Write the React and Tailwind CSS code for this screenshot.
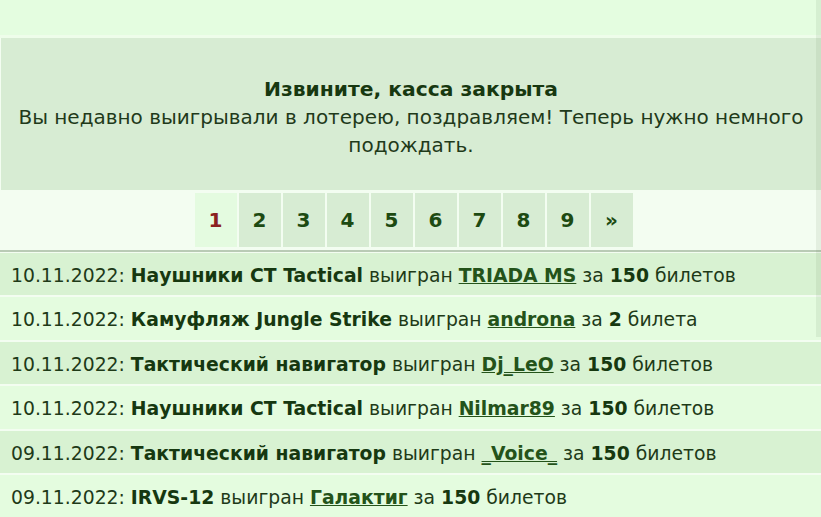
import React from "react";

const rows = [
  { date: "10.11.2022", item: "Наушники CT Tactical", user: "TRIADA MS", n: "150", word: "билетов" },
  { date: "10.11.2022", item: "Камуфляж Jungle Strike", user: "androna", n: "2", word: "билета" },
  { date: "10.11.2022", item: "Тактический навигатор", user: "Dj_LeO", n: "150", word: "билетов" },
  { date: "10.11.2022", item: "Наушники CT Tactical", user: "Nilmar89", n: "150", word: "билетов" },
  { date: "09.11.2022", item: "Тактический навигатор", user: "_Voice_", n: "150", word: "билетов" },
  { date: "09.11.2022", item: "IRVS-12", user: "Галактиг", n: "150", word: "билетов" },
];

const pages = ["1", "2", "3", "4", "5", "6", "7", "8", "9", "»"];

export default function App() {
  return (
    <div
      className="relative w-[821px] h-[517px] overflow-hidden bg-[#f3fdf1] text-[#1e3a18]"
      style={{ fontFamily: '"DejaVu Sans", Verdana, sans-serif' }}
    >
      <div className="h-[35px] bg-[#e4fde0]" />
      <div className="h-[3px] bg-[#eefdea]" />
      <div className="ml-[1px] h-[152px] bg-[#d7ecd3] flex flex-col items-center justify-center text-center pt-[5px] px-[10px] text-[20px] leading-[28px] text-[#1f3a1a]">
        <div className="font-bold text-[20.3px] text-[#173810]">Извините, касса закрыта</div>
        <div>Вы недавно выигрывали в лотерею, поздравляем! Теперь нужно немного подождать.</div>
      </div>
      <div className="h-[60px] flex justify-center items-center">
        <div className="flex gap-[2px] ml-[6px]">
          {pages.map((p, i) => (
            <div
              key={p}
              className={
                "w-[42px] h-[54px] flex items-center justify-center font-bold text-[20px] " +
                (i === 0 ? "bg-[#e4fbe0] text-[#8b2020]" : "bg-[#d7ecd3] text-[#1d4a12]")
              }
            >
              {p}
            </div>
          ))}
        </div>
      </div>
      <div className="h-[2px] bg-[#b9cbb5]" />
      <div className="h-[1px]" />
      <div className="flex flex-col gap-[2px]">
        {rows.map((r, i) => (
          <div
            key={i}
            className={
              "h-[42.4px] flex items-center pl-[11px] pt-[4px] text-[18.8px] whitespace-pre " +
              (i % 2 === 0 ? "bg-[#d8f2d2]" : "bg-[#e4fcdf]")
            }
          >
            <span>{r.date}: </span>
            <b className="text-[#163810]">{r.item}</b>
            <span> выигран </span>
            <a href="#" className="font-bold underline text-[#24531a]">{r.user}</a>
            <span> за </span>
            <b className="text-[#163810]">{r.n}</b>
            <span> {r.word}</span>
          </div>
        ))}
      </div>
      <div className="absolute right-0 top-0 w-[5px] h-[337px] bg-[#5a7a50]/10" />
    </div>
  );
}
